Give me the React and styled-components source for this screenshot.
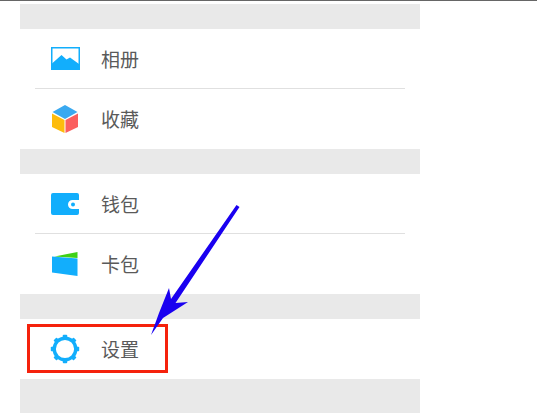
import React from 'react'
import styled, { createGlobalStyle } from 'styled-components'

const GlobalStyle = createGlobalStyle`
    html, body {
        margin: 0;
        padding: 0;
        background: #fff;
    }
`

const Page = styled.div`
    position: relative;
    width: 537px;
    height: 413px;
    overflow: hidden;
    background: #fff;
    border-top: 1px solid #666;
    box-sizing: border-box;
    padding: 3px 117px 0 20px;
    font-family: "Noto Sans CJK SC", "Liberation Sans", sans-serif;
`

const Panel = styled.div`
    display: flex;
    flex-direction: column;
    width: 400px;
`

const Gap = styled.div`
    height: ${p => p.$h || 25}px;
    background: #e9e9e9;
`

const Row = styled.div`
    display: flex;
    align-items: center;
    height: ${p => p.$h || 60}px;
    padding-left: 30px;
    background: #fff;
`

const Divider = styled.div`
    height: 1px;
    margin: 0 15px;
    background: #e0e0e0;
`

const IconBox = styled.div`
    display: flex;
    align-items: center;
    justify-content: center;
    width: 30px;
    height: 30px;
    margin-right: 21px;
`

const Label = styled.span`
    font-size: 19px;
    line-height: 24px;
    color: #5a5a5a;
`

const Highlight = styled.div`
    position: absolute;
    left: 27px;
    top: 323px;
    width: 141px;
    height: 49px;
    box-sizing: border-box;
    border: 3px solid #f5220c;
`

const Arrow = styled.svg`
    position: absolute;
    left: 0;
    top: -1px;
`

const Photo = () => (
    <svg width="29" height="23" viewBox="0 0 29 23">
        <rect x="0.750" y="0.750" width="27.500" height="21.500" fill="#fff" stroke="#12aefc" strokeWidth="1.500" />
        <path d="M1 22V16.500L10.500 8L15.500 12.500L19 10.500L28 17V22Z" fill="#12aefc" />
    </svg>
)

const Cube = () => (
    <svg width="26" height="28" viewBox="0 0 26 28">
        <path d="M13 0L25.500 7L13 14L0.500 7Z" fill="#3aa9f0" />
        <path d="M0 8.500L12.500 15V28L0 22Z" fill="#fdbc0d" />
        <path d="M26 8.500L13.500 15V28L26 22Z" fill="#fb5f5f" />
    </svg>
)

const Wallet = () => (
    <svg width="28" height="22" viewBox="0 0 28 22">
        <path d="M2 0H26A2 2 0 0 1 28 2V7H21.500A4.500 4.500 0 0 0 21.500 16H28V20A2 2 0 0 1 26 22H2A2 2 0 0 1 0 20V2A2 2 0 0 1 2 0Z" fill="#12aefc" />
        <circle cx="22" cy="11.500" r="2" fill="#12aefc" />
    </svg>
)

const Cards = () => (
    <svg width="26" height="24" viewBox="0 0 26 24">
        <path d="M2.500 4.500L25.500 0V6Z" fill="#3fd116" />
        <path d="M0 4.500L25.500 6.500V24L0 20.500Z" fill="#12aefc" />
    </svg>
)

const Gear = () => (
    <svg width="30" height="30" viewBox="0 0 30 30">
        <circle cx="15" cy="15" r="10.800" fill="none" stroke="#12aefc" strokeWidth="3.400" />
        {[0, 45, 90, 135, 180, 225, 270, 315].map(a => (
            <rect key={a} x="12.800" y="0.800" width="4.400" height="4" rx="0.800" fill="#12aefc" transform={`rotate(${a} 15 15)`} />
        ))}
    </svg>
)

export default function App() {
    return (
        <Page>
            <GlobalStyle />
            <Panel>
                <Gap />
                <Row $h={59}><IconBox><Photo /></IconBox><Label>相册</Label></Row>
                <Divider />
                <Row><IconBox><Cube /></IconBox><Label>收藏</Label></Row>
                <Gap />
                <Row $h={59}><IconBox><Wallet /></IconBox><Label>钱包</Label></Row>
                <Divider />
                <Row><IconBox><Cards /></IconBox><Label>卡包</Label></Row>
                <Gap />
                <Row><IconBox><Gear /></IconBox><Label>设置</Label></Row>
                <Gap $h={34} />
            </Panel>
            <Highlight />
            <Arrow width="537" height="413" viewBox="0 0 537 413">
                <path d="M236.500 205L239.500 207L175.500 303L188 302L163 318L151 335L159 313L169 288L171 299Z" fill="#1a00f0" />
            </Arrow>
        </Page>
    )
}
